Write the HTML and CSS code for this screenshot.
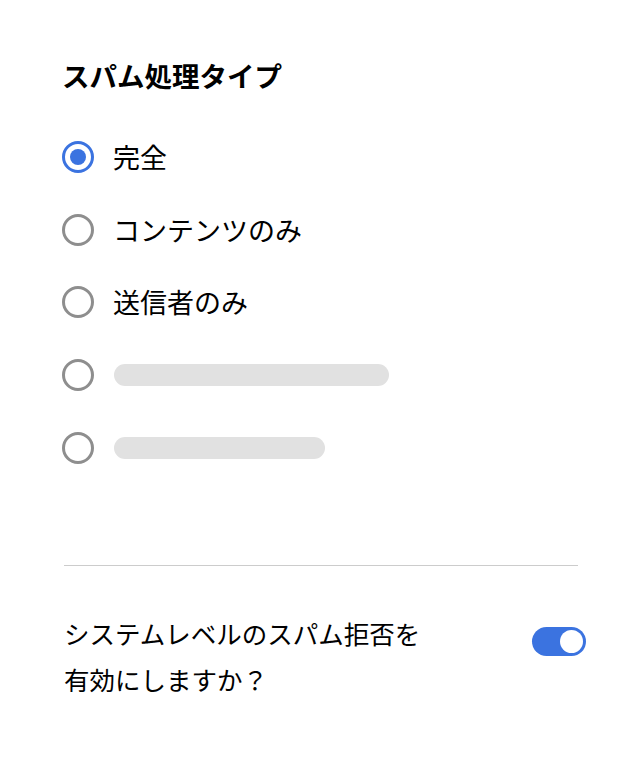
FILE: index.html
```html
<!DOCTYPE html>
<html lang="ja">
<head>
    <meta charset="UTF-8">
    <meta name="viewport" content="width=device-width, initial-scale=1.0">
    <title>スパム処理タイプ</title>
    <link rel="stylesheet" href="styles.css">
</head>
<body>
    <div class="panel">
        <div class="panel-title">スパム処理タイプ</div>
        <div class="radio-list">
            <label class="radio-row">
                <span class="radio checked"></span>
                <span class="radio-label">完全</span>
            </label>
            <label class="radio-row">
                <span class="radio"></span>
                <span class="radio-label">コンテンツのみ</span>
            </label>
            <label class="radio-row">
                <span class="radio"></span>
                <span class="radio-label">送信者のみ</span>
            </label>
            <label class="radio-row">
                <span class="radio"></span>
                <span class="placeholder long"></span>
            </label>
            <label class="radio-row">
                <span class="radio"></span>
                <span class="placeholder short"></span>
            </label>
        </div>
        <div class="divider"></div>
        <div class="setting">
            <div class="setting-text">システムレベルのスパム拒否を<br>有効にしますか？</div>
            <span class="toggle on"><span class="knob"></span></span>
        </div>
    </div>
</body>
</html>
```

FILE: styles.css
```css
body {
    margin: 0;
    padding: 0;
    background-color: #ffffff;
    font-family: "Noto Sans CJK JP", "Noto Sans", sans-serif;
    color: #000000;
}
.panel {
    padding: 55px 62px 0 62px;
}
.panel-title {
    font-size: 27.5px;
    font-weight: bold;
    line-height: 40px;
    margin-bottom: 26px;
}
.radio-row {
    display: flex;
    align-items: center;
    height: 72.6px;
}
.radio {
    box-sizing: border-box;
    width: 32px;
    height: 32px;
    border: 3px solid #8e8e8e;
    border-radius: 50%;
    display: flex;
    align-items: center;
    justify-content: center;
    flex-shrink: 0;
}
.radio.checked {
    border-color: #3b73e0;
}
.radio.checked::after {
    content: "";
    width: 16px;
    height: 16px;
    border-radius: 50%;
    background-color: #3b73e0;
}
.radio-label {
    margin-left: 19px;
    font-size: 27px;
    line-height: 36px;
}
.placeholder {
    margin-left: 20px;
    height: 22px;
    border-radius: 11px;
    background-color: #e1e1e1;
}
.placeholder.long {
    width: 275px;
}
.placeholder.short {
    width: 211px;
}
.divider {
    margin: 81px 0 0 2px;
    width: 514px;
    height: 1px;
    background-color: #cccccc;
}
.setting {
    display: flex;
    justify-content: space-between;
    align-items: flex-start;
    margin-top: 44px;
    width: 524px;
}
.setting-text {
    font-size: 25.5px;
    line-height: 46px;
    margin-left: 2px;
}
.toggle {
    box-sizing: border-box;
    width: 54px;
    height: 29px;
    margin-top: 17px;
    border-radius: 15px;
    background-color: #3b73e0;
    padding: 3px;
    display: flex;
    justify-content: flex-end;
}
.knob {
    width: 23px;
    height: 23px;
    border-radius: 50%;
    background-color: #ffffff;
}
```
